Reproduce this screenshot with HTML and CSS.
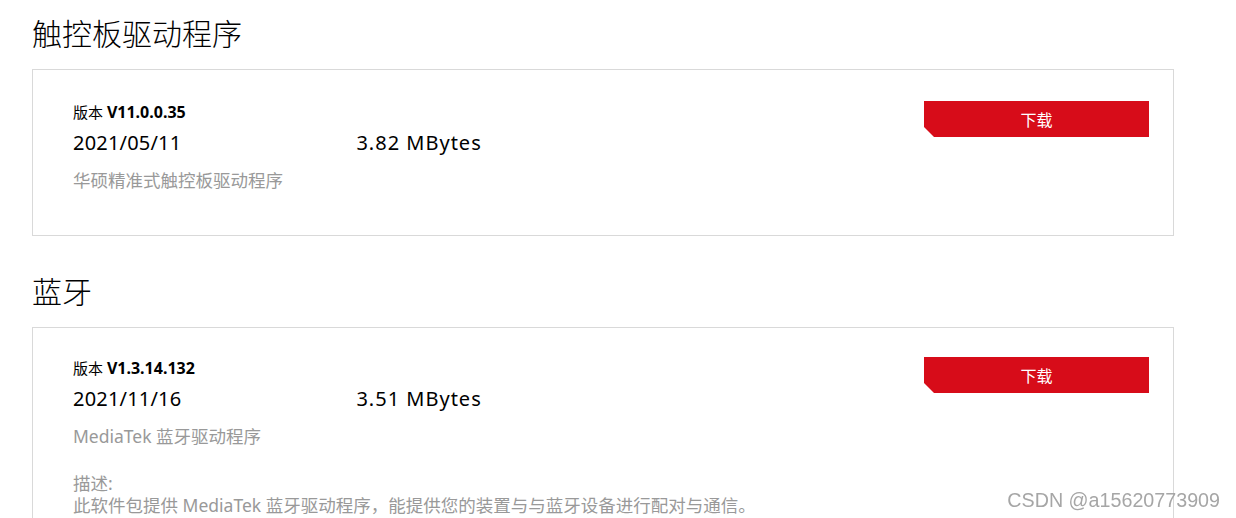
FILE: index.html
```html
<!DOCTYPE html>
<html lang="zh-CN">
<head>
    <meta charset="UTF-8">
    <meta name="viewport" content="width=device-width, initial-scale=1.0"/>
    <title>驱动程序下载</title>
    <link rel="stylesheet" href="styles.css">
</head>
<body>
<div class="page">
    <div class="section">
        <h2 class="section-title">触控板驱动程序</h2>
        <div class="card">
            <div class="info">
                <div class="version">版本 <b>V11.0.0.35</b></div>
                <div class="meta">
                    <span class="date">2021/05/11</span>
                    <span class="size">3.82 MBytes</span>
                </div>
                <div class="name">华硕精准式触控板驱动程序</div>
            </div>
            <button class="download">下载</button>
        </div>
    </div>
    <div class="section">
        <h2 class="section-title">蓝牙</h2>
        <div class="card">
            <div class="info">
                <div class="version">版本 <b>V1.3.14.132</b></div>
                <div class="meta">
                    <span class="date">2021/11/16</span>
                    <span class="size">3.51 MBytes</span>
                </div>
                <div class="name">MediaTek 蓝牙驱动程序</div>
                <div class="desc">
                    描述:<br>
                    此软件包提供 MediaTek 蓝牙驱动程序，能提供您的装置与与蓝牙设备进行配对与通信。
                </div>
            </div>
            <button class="download">下载</button>
        </div>
    </div>
</div>
<div class="watermark">CSDN @a15620773909</div>
</body>
</html>
```

FILE: styles.css
```css
body {
    margin: 0;
    font-family: "Noto Sans", "Noto Sans CJK SC", sans-serif;
    color: #000;
    background: #fff;
}
.page {
    padding: 0 0 40px 32px;
}
.section {
    margin-bottom: 36px;
}
.section-title {
    margin: 14px 0 15px 0;
    font-size: 30px;
    line-height: 40px;
    font-weight: 300;
}
.section + .section .section-title {
    margin-top: 0;
}
.card {
    box-sizing: border-box;
    width: 1142px;
    border: 1px solid #d9d9d9;
    padding: 31px 24px 42px 40px;
    display: flex;
    justify-content: space-between;
    align-items: flex-start;
}
.section + .section .card {
    padding-top: 29px;
}
.version {
    font-size: 15px;
    line-height: 22px;
}
.version b {
    font-size: 16px;
    font-weight: bold;
}
.meta {
    display: flex;
    gap: 175px;
    margin-top: 2px;
    font-size: 20px;
    line-height: 36px;
}
.date {
    letter-spacing: 0.2px;
}
.size {
    letter-spacing: 1px;
}
.name {
    margin-top: 6px;
    font-size: 17.5px;
    line-height: 26px;
    color: #999;
}
.desc {
    margin-top: 23px;
    font-size: 17.5px;
    line-height: 22px;
    color: #999;
}
.download {
    width: 225px;
    height: 36px;
    border: none;
    background-color: #d70c19;
    color: #fff;
    font-family: "Noto Sans CJK SC", sans-serif;
    font-size: 16px;
    cursor: pointer;
    clip-path: polygon(0 0, 100% 0, 100% 100%, 10px 100%, 0 calc(100% - 10px));
}
.watermark {
    position: fixed;
    right: 16px;
    bottom: 6px;
    font-family: "Liberation Sans", Arial, sans-serif;
    font-size: 19.7px;
    color: #a6a6a6;
}
```
